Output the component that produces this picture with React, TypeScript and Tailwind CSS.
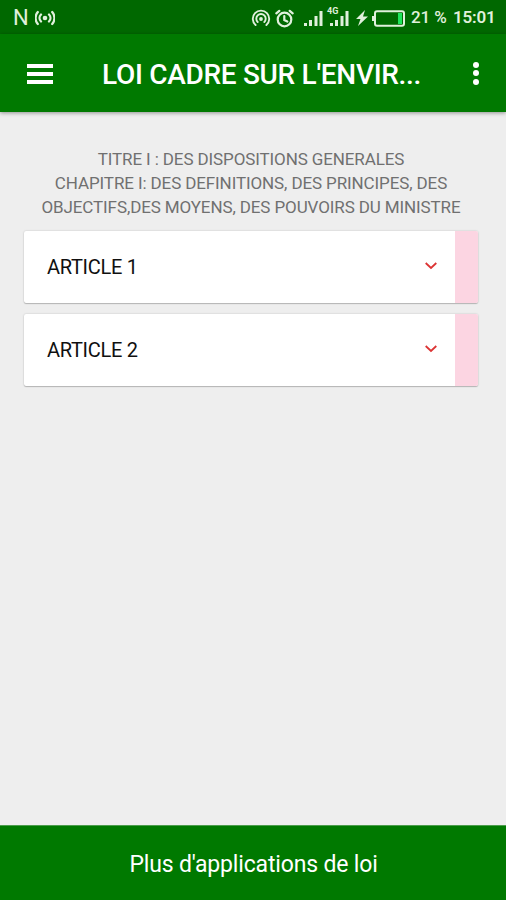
const articles = [
  { id: 1, title: "ARTICLE 1" },
  { id: 2, title: "ARTICLE 2" },
];

const HotspotIcon = () => (
  <svg width="20" height="18" viewBox="0 0 20 18" fill="none" stroke="currentColor" strokeWidth="1.9" strokeLinecap="round">
    <path d="M4.6 16A8.2 8.2 0 1 1 15.4 16" />
    <path d="M6.7 13A4.7 4.7 0 1 1 13.3 13" />
    <circle cx="10" cy="10" r="1.9" fill="currentColor" stroke="none" />
  </svg>
);

const AlarmIcon = () => (
  <svg width="19" height="19" viewBox="0 0 19 19" fill="none" stroke="currentColor" strokeWidth="2.2" strokeLinecap="round">
    <circle cx="9.5" cy="10.5" r="6.8" />
    <path d="M9.3 7v4l3 1.5M1.3 4.4l3-2.6M17.7 4.4l-3-2.6" />
  </svg>
);

const BroadcastIcon = () => (
  <svg width="20" height="16" viewBox="0 0 20 16" fill="none" stroke="currentColor" strokeWidth="2.3" strokeLinecap="round">
    <circle cx="10" cy="8" r="2.3" fill="currentColor" stroke="none" />
    <path d="M6 4.500a5 5 0 0 0 0 7M14 4.500a5 5 0 0 1 0 7M2.800 2a9 9 0 0 0 0 12M17.200 2a9 9 0 0 1 0 12" />
  </svg>
);

const SignalIcon = () => (
  <svg width="19" height="15" viewBox="0 0 19 15" fill="currentColor">
    <path d="M0 12h3v3H0zM5 9h3v6H5zM10.500 5h3v10h-3zM15.500 0h3v15h-3z" />
  </svg>
);

const BatteryIcon = () => (
  <svg width="33" height="17" viewBox="0 0 33 17" fill="none">
    <rect x="3" y="1.2" width="29" height="14.6" rx="2" stroke="currentColor" strokeWidth="2" />
    <path d="M0 6h2v5H0z" fill="currentColor" />
    <path d="M26 3h4v11h-4z" fill="#1ee35b" />
  </svg>
);

const StatusBar = () => (
  <div className="flex h-[34px] items-center bg-[#006800] pt-[2px] text-[#e0f0dc]">
    <span className="ml-[13px] w-[22px] text-[22px] leading-none">N</span>
    <BroadcastIcon />
    <div className="ml-auto flex items-center pr-[11px]">
      <HotspotIcon />
      <span className="ml-[4px]"><AlarmIcon /></span>
      <span className="ml-[10px]"><SignalIcon /></span>
      <span className="relative ml-[7px]">
        <SignalIcon />
        <span className="absolute -top-[5px] -left-[3px] bg-[#006800] pr-px text-[9px] leading-[10px] font-bold">4G</span>
      </span>
      <svg className="ml-[7px]" width="12" height="16" viewBox="0 0 12 16" fill="currentColor">
        <path d="M9 0 0 9h4.500L2 16 12 6.500H7z" />
      </svg>
      <span className="ml-[4px]"><BatteryIcon /></span>
      <span className="ml-[6px] w-[42px] text-[17px] font-medium tracking-[-0.1px] whitespace-nowrap">21 %</span>
      <span className="w-[42px] text-[17px] font-semibold tracking-[-0.2px] whitespace-nowrap">15:01</span>
    </div>
  </div>
);

const Header = () => (
  <header className="relative flex h-[78px] items-center bg-[#007900] text-white shadow-[0_1px_4px_rgba(0,0,0,0.4)]">
    <button className="mt-px ml-[27px] flex w-[26px] flex-col gap-[4px]" aria-label="Menu">
      <span className="h-[4px] w-full bg-white" />
      <span className="h-[4px] w-full bg-white" />
      <span className="h-[4px] w-full bg-white" />
    </button>
    <h1 className="mt-[4px] ml-[49px] w-[330px] text-[28px] font-medium tracking-[-0.3px] whitespace-nowrap">LOI CADRE SUR L'ENVIR...</h1>
    <button className="mr-[27px] ml-auto flex flex-col gap-[2.5px]" aria-label="Options">
      <span className="size-[6px] rounded-full bg-white" />
      <span className="size-[6px] rounded-full bg-white" />
      <span className="size-[6px] rounded-full bg-white" />
    </button>
  </header>
);

const ArticleCard = ({ title }: { title: string }) => (
  <li className="flex h-[72px] items-center overflow-hidden rounded-[2px] bg-white shadow-[0_0_2px_rgba(0,0,0,0.2),0_1px_1px_rgba(0,0,0,0.2)]">
    <span className="ml-[23px] text-[20px] tracking-[-0.3px] text-[#101010]">{title}</span>
    <svg className="mr-[18px] mb-[2px] ml-auto" width="12" height="8" viewBox="0 0 12 8" fill="none" stroke="#dc3434" strokeWidth="1.8">
      <path d="m.7 1 5.3 5L11.3 1" />
    </svg>
    <span className="h-full w-[23px] bg-[#fcd5e2]" />
  </li>
);

export default function App() {
  return (
    <div className="flex h-[900px] w-[506px] flex-col overflow-hidden bg-[#eeeeee] font-['Roboto',sans-serif]">
      <StatusBar />
      <Header />
      <main className="flex-1 pt-[35px] pr-[28px] pl-[24px]">
        <div className="text-center text-[17px] leading-[24px] tracking-[-0.11px] whitespace-nowrap text-[#707070]">
          <p>TITRE I : DES DISPOSITIONS GENERALES</p>
          <p>CHAPITRE I: DES DEFINITIONS, DES PRINCIPES, DES</p>
          <p>OBJECTIFS,DES MOYENS, DES POUVOIRS DU MINISTRE</p>
        </div>
        <ul className="mt-[12px] flex flex-col gap-[11px]">
          {articles.map((article) => (
            <ArticleCard key={article.id} title={article.title} />
          ))}
        </ul>
      </main>
      <footer className="flex h-[75px] items-center justify-center border-t border-[#4c9c4c] bg-[#007900] pt-[4px] pl-px text-[23px] tracking-[-0.17px] text-white">
        Plus d'applications de loi
      </footer>
    </div>
  );
}
